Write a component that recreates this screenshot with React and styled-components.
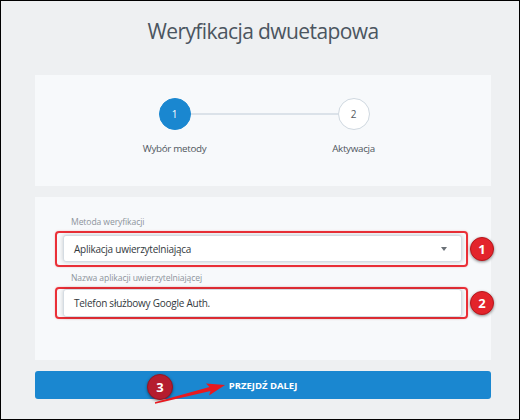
import React from 'react';
import styled, { createGlobalStyle } from 'styled-components';

const Global = createGlobalStyle`
  html, body { margin: 0; padding: 0; }
  body { font-family: "Open Sans", "Noto Sans", sans-serif; }
`;

const Page = styled.div`
  box-sizing: border-box;
  width: 520px;
  height: 420px;
  border: 1px solid #000;
  background: #eef0f2;
  padding: 0 28px 0 34px;
  display: flex;
  flex-direction: column;
  overflow: hidden;
`;

const Title = styled.h1`
  margin: 0 0 29px;
  padding-top: 15px;
  line-height: 30px;
  text-align: center;
  font-weight: 400;
  font-size: 21px;
  letter-spacing: -0.6px;
  color: #4b5560;
`;

const Card = styled.section`
  box-sizing: border-box;
  background: #f7f9fb;
  height: ${p => p.$h}px;
  margin-bottom: 11px;
  padding-top: ${p => p.$pt}px;
  display: flex;
  flex-direction: column;
`;

const StepsRow = styled.div`
  display: flex;
  align-items: center;
  justify-content: center;
  padding-left: 2px;
`;

const Circle = styled.div`
  box-sizing: border-box;
  width: 32px;
  height: 32px;
  border-radius: 50%;
  display: flex;
  align-items: center;
  justify-content: center;
  font-size: 10px;
  background: ${p => (p.$active ? '#1a87d0' : '#ffffff')};
  color: ${p => (p.$active ? '#ffffff' : '#555b62')};
  border: 1px solid ${p => (p.$active ? '#1a87d0' : '#cfd8e0')};
`;

const Connector = styled.div`
  width: 147px;
  height: 2px;
  background: #dbe2e9;
`;

const LabelsRow = styled.div`
  display: flex;
  justify-content: center;
  gap: 59px;
  margin-top: 11px;
  padding-left: 2px;
`;

const StepLabel = styled.div`
  width: 120px;
  text-align: center;
  font-size: 9.8px;
  letter-spacing: -0.3px;
  line-height: 15px;
  color: #50575e;
`;

const Form = styled.div`
  display: flex;
  flex-direction: column;
  padding-left: 20px;
`;

const FieldLabel = styled.div`
  font-size: 8.6px;
  letter-spacing: -0.1px;
  line-height: 12px;
  color: #8d949b;
  padding-left: 16px;
  margin: ${p => p.$mt}px 0 3px;
`;

const FieldRow = styled.div`
  position: relative;
  width: 413px;
`;

const Highlight = styled.div`
  box-sizing: border-box;
  width: 413px;
  border: 2px solid #ea2f37;
  border-radius: 4px;
  padding: ${p => p.$pad};
  box-shadow: 0 0 2px rgba(200, 0, 0, 0.25);
`;

const Input = styled.div`
  box-sizing: border-box;
  height: ${p => p.$h}px;
  background: #fff;
  border: 1px solid #d5dce3;
  border-radius: 3px;
  box-shadow: 0 0 4px rgba(0, 0, 0, 0.18);
  display: flex;
  align-items: center;
  justify-content: space-between;
  padding: 0 14px 0 10px;
  font-size: 10px;
  letter-spacing: -0.25px;
  color: #33383d;
`;

const Caret = styled.span`
  width: 0;
  height: 0;
  border-left: 3.5px solid transparent;
  border-right: 3.5px solid transparent;
  border-top: 4px solid #6b7177;
`;

const Badge = styled.div`
  position: absolute;
  left: ${p => p.$x}px;
  top: ${p => p.$y}px;
  box-sizing: border-box;
  width: ${p => p.$size}px;
  height: ${p => p.$size}px;
  border-radius: 50%;
  background: ${p => p.$bg};
  border: 1px solid ${p => p.$ring};
  box-shadow: 0 1px 3px rgba(0, 0, 0, 0.45);
  display: flex;
  align-items: center;
  justify-content: center;
  color: #fff;
  font-weight: 700;
  font-size: 13px;
  letter-spacing: 0;
`;

const Button = styled.button`
  position: relative;
  height: 28px;
  border: 0;
  border-radius: 3px;
  background: #1a87d0;
  color: #fff;
  font-family: "Open Sans", "Noto Sans", sans-serif;
  font-weight: 700;
  font-size: 9.5px;
  padding: 0;
  cursor: pointer;
`;

const Arrow = styled.svg`
  position: absolute;
  left: 115px;
  top: 7px;
  overflow: visible;
`;

export default function App() {
  return (
    <>
      <Global />
      <Page>
        <Title>Weryfikacja dwuetapowa</Title>
        <Card $h={111} $pt={23}>
          <StepsRow>
            <Circle $active>1</Circle>
            <Connector />
            <Circle>2</Circle>
          </StepsRow>
          <LabelsRow>
            <StepLabel>Wybór metody</StepLabel>
            <StepLabel>Aktywacja</StepLabel>
          </LabelsRow>
        </Card>
        <Card $h={163} $pt={19}>
          <Form>
            <FieldLabel $mt={0}>Metoda weryfikacji</FieldLabel>
            <FieldRow>
              <Highlight $pad="2px 4px 3px 6px">
                <Input $h={27}>
                  <span>Aplikacja uwierzytelniająca</span>
                  <Caret />
                </Input>
              </Highlight>
              <Badge $x={415} $y={6} $size={24} $bg="#e3242b" $ring="#b8161c">1</Badge>
            </FieldRow>
            <FieldLabel $mt={5}>Nazwa aplikacji uwierzytelniającej</FieldLabel>
            <FieldRow>
              <Highlight $pad="0 4px 0 6px">
                <Input $h={28}>
                  <span>Telefon służbowy Google Auth.</span>
                </Input>
              </Highlight>
              <Badge $x={415} $y={4} $size={24} $bg="#e3242b" $ring="#b8161c">2</Badge>
            </FieldRow>
          </Form>
        </Card>
        <Button>
          PRZEJDŹ DALEJ
          <Badge $x={112} $y={3} $size={26} $bg="#b51d2e" $ring="#961423">3</Badge>
          <Arrow width="80" height="28" viewBox="0 0 80 28">
            <polygon
              points="4.9,24.3 59.5,9.1 56,5.5 75,7 59,17.5 60.5,12.9 5.1,25.7"
              fill="#e8191f"
            />
          </Arrow>
        </Button>
      </Page>
    </>
  );
}
